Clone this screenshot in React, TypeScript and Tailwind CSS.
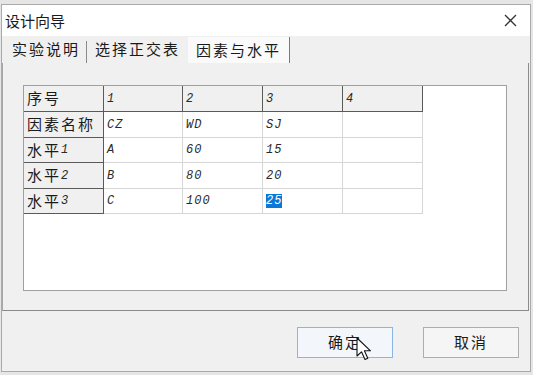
import React from 'react';

const cjk = "font-['Noto_Sans_CJK_SC','Noto_Sans',sans-serif]";
const mono = "font-['Liberation_Mono',monospace] italic text-[12px] tracking-[1px] text-[#2a2a2a]";

const cols = ['1', '2', '3', '4'];

const rows: { label: string; num?: string; cells: string[] }[] = [
  { label: '因素名称', cells: ['CZ', 'WD', 'SJ', ''] },
  { label: '水平', num: '1', cells: ['A', '60', '15', ''] },
  { label: '水平', num: '2', cells: ['B', '80', '20', ''] },
  { label: '水平', num: '3', cells: ['C', '100', '25', ''] },
];

const colW = ['w-[80px]', 'w-[79px]', 'w-[80px]', 'w-[80px]', 'w-[80px]'];
const rowH = ['h-[26px]', 'h-[26px]', 'h-[25px]', 'h-[26px]', 'h-[25px]'];

function FixedCell({ w, h, children }: { w: string; h: string; children?: React.ReactNode }) {
  return (
    <div className={`${w} ${h} shrink-0 bg-[#f0f0f0] border-r border-b border-[#5a5a5a] flex items-center pl-[3px]`}>
      {children}
    </div>
  );
}

function DataCell({ w, h, children }: { w: string; h: string; children?: React.ReactNode }) {
  return (
    <div className={`${w} ${h} shrink-0 bg-white border-r border-b border-[#d6d6d6] flex items-center pl-[3px]`}>
      {children}
    </div>
  );
}

export default function App() {
  return (
    <div className="relative w-[533px] h-[375px] bg-[#e6e6e6] overflow-hidden">
      <div className="ml-[1px] mt-[4px] w-[530px] h-[368px] border border-[#aaaaaa] bg-[#f0f0f0] flex flex-col">
        {/* title bar */}
        <div className="h-[31px] bg-white flex items-center justify-between pl-[3px] pr-[13px]">
          <span className={`${cjk} text-[15px] text-[#1a1a1a] leading-none`}>设计向导</span>
          <svg width="13" height="13" viewBox="0 0 13 13">
            <path d="M1 1 L12 12 M12 1 L1 12" stroke="#333" strokeWidth="1.3" />
          </svg>
        </div>

        {/* tabs */}
        <div className="h-[27px] flex items-end">
          <div className={`w-[84px] h-[27px] flex items-center justify-center pl-[4px] ${cjk} text-[15px] tracking-[2px] text-[#1a1a1a]`}>
            实验说明
          </div>
          <div className="w-px h-[22px] bg-[#8a8a8a] self-end" />
          <div className={`w-[101px] h-[27px] flex items-center justify-center ${cjk} text-[15px] tracking-[2px] text-[#1a1a1a]`}>
            选择正交表
          </div>
          <div className={`w-[102px] h-[26px] bg-[#fafafa] border-r border-[#7a7a7a] flex items-center justify-center ${cjk} text-[15px] tracking-[2px] text-[#1a1a1a]`}>
            因素与水平
          </div>
        </div>

        {/* tab page */}
        <div className="h-[248px] border-l border-r border-b border-l-[#a8a8a8] border-r-[#8c8c8c] border-b-[#8a8a8a] mr-[1px] pt-[22px] pl-[20px]">
          <div className="w-[484px] h-[206px] bg-white border border-[#a0a0a0]">
            <div className="flex">
              <FixedCell w={colW[0]} h={rowH[0]}>
                <span className={`${cjk} text-[15px] tracking-[2px] text-[#1a1a1a]`}>序号</span>
              </FixedCell>
              {cols.map((c, i) => (
                <FixedCell key={c} w={colW[i + 1]} h={rowH[0]}>
                  <span className={mono}>{c}</span>
                </FixedCell>
              ))}
            </div>
            {rows.map((r, ri) => (
              <div key={ri} className="flex">
                <FixedCell w={colW[0]} h={rowH[ri + 1]}>
                  <span className={`${cjk} text-[15px] tracking-[2px] text-[#1a1a1a]`}>{r.label}</span>
                  {r.num && <span className={mono}>{r.num}</span>}
                </FixedCell>
                {r.cells.map((v, ci) => (
                  <DataCell key={ci} w={colW[ci + 1]} h={rowH[ri + 1]}>
                    {ri === 3 && ci === 2 ? (
                      <span className={`${mono} bg-[#0a78d7] !text-white leading-[14px]`}>{v}</span>
                    ) : (
                      <span className={mono}>{v}</span>
                    )}
                  </DataCell>
                ))}
              </div>
            ))}
          </div>
        </div>

        {/* buttons */}
        <div className="flex-1 flex justify-end items-start gap-[30px] pt-[16px] pr-[11px]">
          <button className={`w-[96px] h-[31px] bg-[#f3f7fb] border border-[#88b7e6] ${cjk} text-[15px] tracking-[2px] text-[#1a1a1a] flex items-center justify-center`}>
            确定
          </button>
          <button className={`w-[96px] h-[31px] bg-[#f5f5f5] border border-[#adadad] ${cjk} text-[15px] tracking-[2px] text-[#1a1a1a] flex items-center justify-center`}>
            取消
          </button>
        </div>
      </div>

      {/* mouse cursor */}
      <svg className="absolute left-[356px] top-[337px]" width="17" height="25" viewBox="0 0 17 25">
        <path d="M1 1 L1 19 L5.5 14.8 L9 22.5 L11.8 21.3 L8.4 13.8 L14.5 13.8 Z" fill="white" stroke="#111" strokeWidth="1.1" strokeLinejoin="round" />
      </svg>
    </div>
  );
}
